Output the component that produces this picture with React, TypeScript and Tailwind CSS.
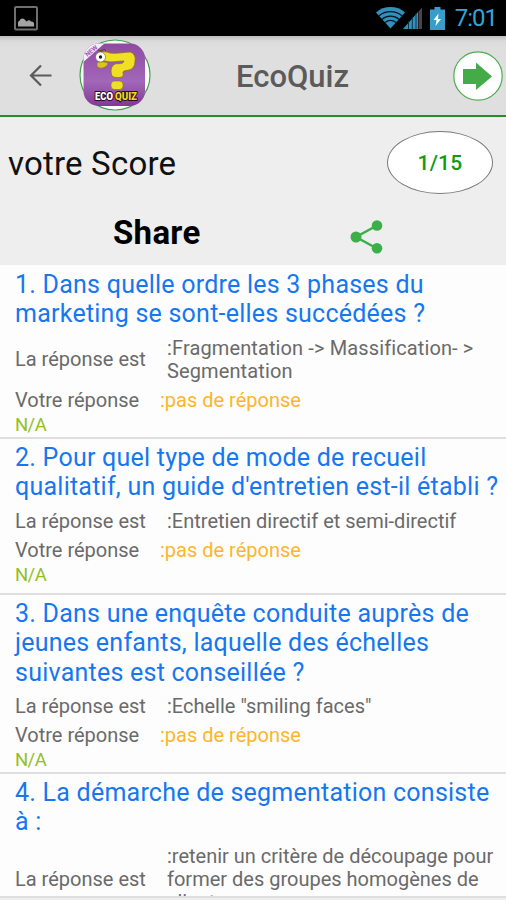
type Question = {
  id: number;
  title: string[];
  answer: string[];
  given?: string;
  className: string;
};

const questions: Question[] = [
  {
    id: 1,
    title: ["1. Dans quelle ordre les 3 phases du", "marketing se sont-elles succédées ?"],
    answer: [":Fragmentation -> Massification- >", "Segmentation"],
    given: ":pas de réponse",
    className: "h-[174px] pt-[5px] tracking-[0.12px]",
  },
  {
    id: 2,
    title: ["2. Pour quel type de mode de recueil", "qualitatif, un guide d'entretien est-il établi ?"],
    answer: [":Entretien directif et semi-directif"],
    given: ":pas de réponse",
    className: "h-[156px] pt-[4px]",
  },
  {
    id: 3,
    title: ["3. Dans une enquête conduite auprès de", "jeunes enfants, laquelle des échelles", "suivantes est conseillée ?"],
    answer: [':Echelle "smiling faces"'],
    given: ":pas de réponse",
    className: "h-[179px] pt-[4px]",
  },
  {
    id: 4,
    title: ["4. La démarche de segmentation consiste", "à :"],
    answer: [":retenir un critère de découpage pour", "former des groupes homogènes de", "clients"],
    className: "h-[124px] pt-1 overflow-hidden",
  },
];

function StatusBar() {
  return (
    <div className="flex h-9 items-center bg-black pl-[14px] pr-[9px]">
      <svg width="24" height="25" viewBox="0 0 24 25" fill="none">
        <rect x="1" y="1" width="22" height="22.5" rx="1" stroke="#6f6f6f" strokeWidth="2" />
        <path d="M4 20.500v-3.500a2.500 2.500 0 0 1 1.700-2.400 2.900 2.900 0 0 1 5.500-.3 2 2 0 0 1 1.500 1.500 2.300 2.300 0 0 1 4.200-.3 2.500 2.500 0 0 1 3.200 2.400v2.600z" fill="#a3a3a3" />
      </svg>
      <div className="ml-auto flex items-center">
        <svg width="29" height="22" viewBox="0 0 29 22">
          <path d="M14.500 21.500 0 5.500C8-1.700 21-1.700 29 5.500z" fill="#3191be" />
          <g fill="none" stroke="#06151c" strokeWidth="1.300">
            <path d="M3 8.800c6.600-5.700 16.400-5.700 23 0" />
            <path d="M6 12.200c5-4.200 12-4.200 17 0" />
            <path d="M9 15.600c3.300-2.700 7.700-2.700 11 0" />
          </g>
        </svg>
        <svg className="-ml-[2px]" width="20" height="22" viewBox="0 0 20 22">
          <path d="M0 22 15 5v17z" fill="#3191be" />
          <path d="M15.500 4.500 19 .5V22h-3.500z" fill="#4a4446" />
          <path d="M5.500 14v8M9.300 10v12M13 6v16" stroke="#0b2b3a" strokeWidth=".9" />
        </svg>
        <svg className="ml-[7px]" width="15" height="23" viewBox="0 0 15 23">
          <path d="M4.500 0h6v2.500H15V23H0V2.500h4.500z" fill="#3a9ccb" />
          <path d="M8.500 6.500 3.500 13h3l-1 6 5.500-7H8z" fill="#fff" />
        </svg>
        <span className="ml-[10px] text-[24px] leading-9 tracking-[-1px] text-[#33a5d8]">7:01</span>
      </div>
    </div>
  );
}

function Logo() {
  return (
    <svg width="72" height="72" viewBox="0 0 72 72">
      <defs>
        <linearGradient id="purple" x1="0" y1="0" x2="0" y2="1">
          <stop offset="0" stopColor="#9049a2" />
          <stop offset=".6" stopColor="#a267b8" />
          <stop offset="1" stopColor="#803795" />
        </linearGradient>
        <clipPath id="tile">
          <rect x="4.500" y="4.500" width="61.500" height="62.500" rx="15" />
        </clipPath>
      </defs>
      <circle cx="36" cy="36" r="35" fill="#fff" stroke="#3fa34d" strokeWidth="1.200" />
      <g clipPath="url(#tile)">
        <rect x="4" y="4" width="63" height="64" fill="url(#purple)" />
        <path d="M3 24 26 4H3z" fill="#f6eef8" />
      </g>
      <text x="8.500" y="18" transform="rotate(-40 8.500 18)" fontSize="6.500" fontWeight="700" fill="#a05bb5">
        NEW
      </text>
      <path
        d="M21 14c3-2 7-1 10 0 7 1 15-1 20-1 4 1 6 5 5 9 0 5-2 8-6 9-3 1-5 0-6 2 0 2 1 4-1 5-3 1-8 1-10-1-2-5-1-10 3-12 3-1 8 1 9-3-6 0-13 2-19 0-5 1-8-4-5-8z"
        fill="#f1df26"
        stroke="#887417"
        strokeWidth=".8"
      />
      <path d="M18 24c3-2 7-1 11 0-1 5-9 7-11 3z" fill="#d9c520" stroke="#887417" strokeWidth=".5" />
      <rect x="32" y="42" width="12" height="8.500" rx="3.500" fill="#f1df26" stroke="#887417" strokeWidth=".6" />
      <circle cx="21.500" cy="18" r="5" fill="#fff" stroke="#655b40" strokeWidth=".6" />
      <circle cx="21.500" cy="18" r="1.700" fill="#222" />
      <path d="m19 11 4 1 2-2 2 2" fill="none" stroke="#554717" />
      <g fontSize="10.500" fontWeight="900" stroke="#241029" strokeWidth="2" paintOrder="stroke">
        <text x="16" y="61" textLength="18" lengthAdjust="spacingAndGlyphs" fill="#fff">ECO</text>
        <text x="36" y="61" textLength="22" lengthAdjust="spacingAndGlyphs" fill="#f0d91f">QUIZ</text>
      </g>
    </svg>
  );
}

function Header() {
  return (
    <header className="flex h-[81px] items-center border-b-2 border-[#268c2b] bg-[linear-gradient(#bcbcbc,#dadada_5px,#dfdfdf_12px)] pl-[29px] pr-[3px]">
      <button type="button" aria-label="Retour">
        <svg width="23" height="23" viewBox="0 0 23 23" fill="none" stroke="#5b5b5b" strokeWidth="2.200">
          <path d="M22.500 11.500H2M12 1.500l-10 10 10 10" />
        </svg>
      </button>
      <div className="-mt-px ml-[27px]">
        <Logo />
      </div>
      <h1 className="ml-[85px] pt-[2px] text-[31px] font-medium leading-9 text-[#5b5b5b]">EcoQuiz</h1>
      <button type="button" aria-label="Suivant" className="ml-auto">
        <svg width="50" height="50" viewBox="0 0 50 50">
          <circle cx="25" cy="25" r="24.200" fill="#fff" stroke="#4cae50" strokeWidth="1.200" />
          <path d="M10 18h13v-6.500L39 25.500 23 39v-6H10z" fill="#43ac47" />
        </svg>
      </button>
    </header>
  );
}

function Score() {
  return (
    <section className="h-[148px] bg-[#eeeeee] pt-[14px]">
      <div className="flex h-[63px] items-center pl-2 pr-[13px]">
        <span className="pt-[2px] text-[33px] tracking-[0.2px] text-[#111]">votre Score</span>
        <div className="ml-auto flex h-[63px] w-[106px] items-center justify-center rounded-[50%] border border-[#777] bg-white pt-[2px] text-[21px] font-medium tracking-[0.2px] text-[#109a10]">
          1/15
        </div>
      </div>
      <div className="flex h-[78px] items-center pl-[113px]">
        <span className="text-[33px] font-bold tracking-[0.3px] text-black">Share</span>
        <svg className="ml-auto mr-[123px] mt-2" width="33" height="34" viewBox="0 0 33 34" fill="#3caf49">
          <path d="M27 5.500 6 17l21 11.500" fill="none" stroke="#3caf49" strokeWidth="2.500" />
          <circle cx="27" cy="5.500" r="5.300" />
          <circle cx="6" cy="17" r="5.500" />
          <circle cx="27" cy="28.200" r="5.300" />
        </svg>
      </div>
    </section>
  );
}

function QuestionRow({ question }: { question: Question }) {
  return (
    <li className={`border-b-2 border-[#dedede] pl-[15px] ${question.className}`}>
      <h2 className="whitespace-nowrap text-[25px] leading-[29.300px] tracking-[0.240px] text-[#1677f0]">
        {question.title.map((line) => (
          <span key={line} className="block">
            {line}
          </span>
        ))}
      </h2>
      <div className="mt-2 flex items-center whitespace-nowrap text-[20px] leading-[23.300px] text-[#6a6a6a]">
        <span className="w-[152px] tracking-normal">La réponse est</span>
        <div>
          {question.answer.map((line) => (
            <span key={line} className="block">
              {line}
            </span>
          ))}
        </div>
      </div>
      {question.given && (
        <>
          <div className="mt-[6px] flex whitespace-nowrap text-[20px] leading-[23.300px] tracking-normal text-[#6a6a6a]">
            <span className="w-[145px]">Votre réponse</span>
            <span className="text-[#fdb52b]">{question.given}</span>
          </div>
          <p className="mt-px text-[18.500px] leading-6 tracking-[-0.6px] text-[#93c01f]">N/A</p>
        </>
      )}
    </li>
  );
}

export default function App() {
  return (
    <div className="h-[900px] overflow-hidden bg-[#eeeeee] font-['Roboto',sans-serif]">
      <StatusBar />
      <Header />
      <Score />
      <ul className="bg-[#fdfdfd]">
        {questions.map((question) => (
          <QuestionRow key={question.id} question={question} />
        ))}
      </ul>
    </div>
  );
}
